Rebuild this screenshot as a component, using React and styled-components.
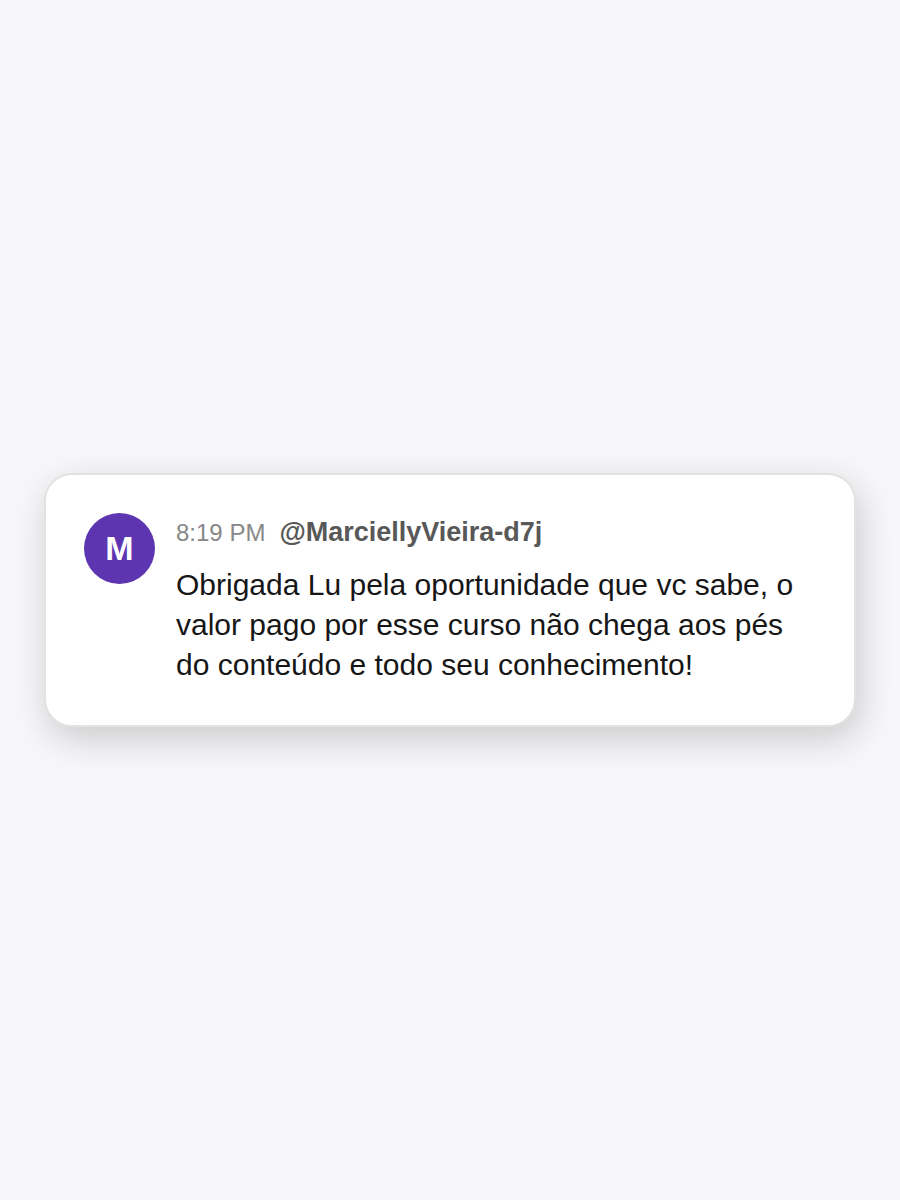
import React from "react";
import styled, { createGlobalStyle } from "styled-components";

const GlobalStyle = createGlobalStyle`
  * {
    box-sizing: border-box;
  }

  body {
    margin: 0;
    background: #f7f7f9;
    font-family: "Liberation Sans", Arial, sans-serif;
  }
`;

const Page = styled.main`
  display: flex;
  align-items: center;
  min-height: 100vh;
  padding: 44px;
`;

const Card = styled.article`
  display: flex;
  gap: 21px;
  width: 100%;
  padding: 38px 38px 40px;
  background: #ffffff;
  border: 2px solid #e2e2e3;
  border-radius: 28px;
  box-shadow: 4px 12px 36px rgba(0, 0, 0, 0.18);
`;

const Avatar = styled.div`
  display: flex;
  flex: none;
  align-items: center;
  justify-content: center;
  width: 71px;
  height: 71px;
  background: #5e35b1;
  border-radius: 50%;
  color: #ffffff;
  font-size: 34px;
  font-weight: 700;
`;

const Content = styled.div`
  flex: 1;
  min-width: 0;
`;

const Meta = styled.header`
  display: flex;
  align-items: baseline;
  gap: 14px;
  line-height: 38px;
`;

const Time = styled.time`
  color: #888888;
  font-size: 24px;
`;

const Author = styled.span`
  color: #585858;
  font-size: 27px;
  font-weight: 700;
`;

const Text = styled.p`
  margin: 13px 0 0;
  color: #161616;
  font-size: 30px;
  line-height: 40px;
`;

const comment = {
  time: "8:19 PM",
  author: "@MarciellyVieira-d7j",
  initial: "M",
  text: "Obrigada Lu pela oportunidade que vc sabe, o valor pago por esse curso não chega aos pés do conteúdo e todo seu conhecimento!",
};

const App = () => {
  return (
    <>
      <GlobalStyle />
      <Page>
        <Card>
          <Avatar>{comment.initial}</Avatar>
          <Content>
            <Meta>
              <Time>{comment.time}</Time>
              <Author>{comment.author}</Author>
            </Meta>
            <Text>{comment.text}</Text>
          </Content>
        </Card>
      </Page>
    </>
  );
};

export default App;
